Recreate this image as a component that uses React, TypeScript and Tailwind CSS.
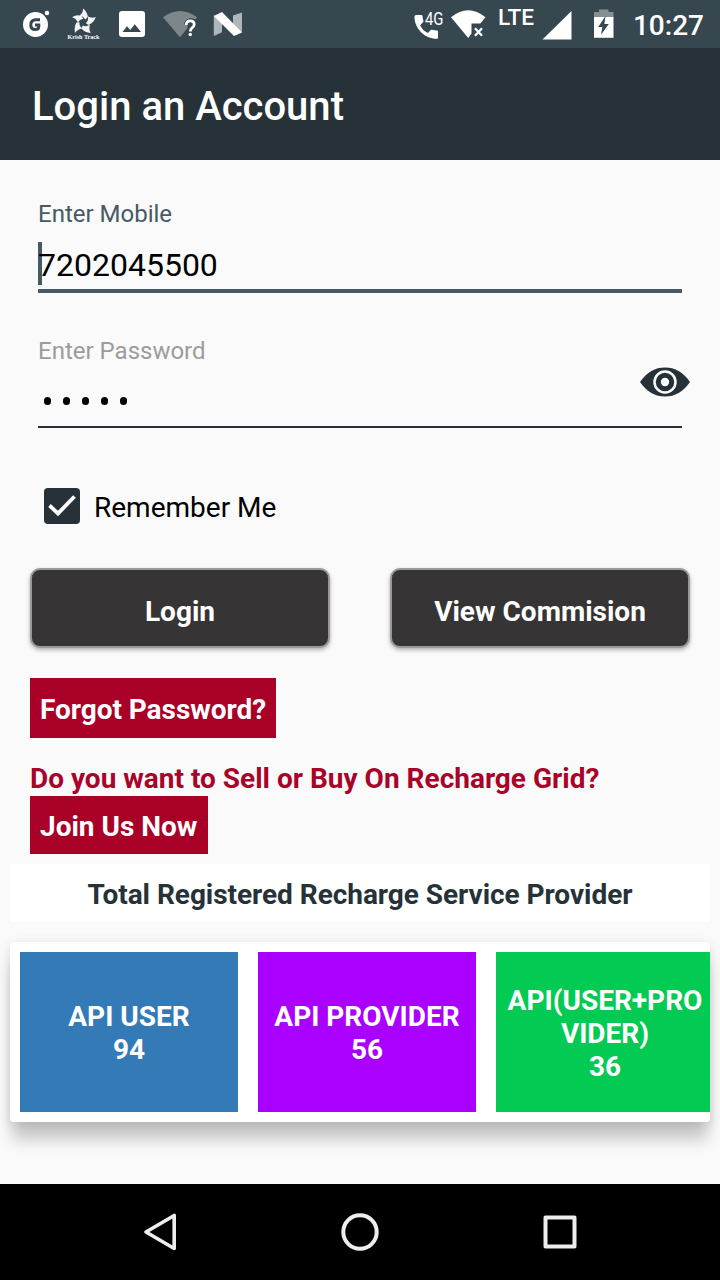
import React from 'react'

const tiles = [
    { title: 'API USER', count: 94, color: 'bg-[#347ab7]' },
    { title: 'API PROVIDER', count: 56, color: 'bg-[#aa00ff]' },
    { title: 'API(USER+PROVIDER)', count: 36, color: 'bg-[#03ca53]' },
]

const StatusBar = () => {
    return (
        <div className="flex h-12 shrink-0 items-center justify-between bg-[#37474f] pl-5 pr-4 text-white">
            <div className="flex items-center gap-3">
                <svg width="32" height="48" viewBox="20 0 32 48">
                    <circle cx="35.5" cy="24.5" r="12.5" fill="#fff" />
                    <circle cx="47" cy="13" r="2.3" fill="#fff" />
                    <path d="M40 19.8H35.8C32.3 19.8 30.8 21.8 30.8 24.8C30.8 27.8 32.5 29.6 35.3 29.6C37.6 29.6 38.8 28.6 38.8 26.6V25H35" fill="none" stroke="#37474f" strokeWidth="3" />
                </svg>
                <svg width="40" height="48" viewBox="64 0 40 48">
                    <g fill="#f1f4f5">
                        <path d="M83 8.5Q87.500 12 87.800 17L85.300 19.500Q83.500 16.200 79.500 15.500Q83 13.500 83 8.500Z" />
                        <path d="M95.800 17Q94 22.500 88.500 25L85.800 23.200Q88.500 21 88 16.500Q91.500 18.500 95.800 17Z" />
                        <path d="M90.800 33Q84.500 32.500 81.500 28.500L82.800 25.500Q86 27.200 90 24.800Q88.500 29 90.800 33Z" />
                        <path d="M75 33Q73.800 27 76.500 22.500L79.500 22.200Q79 26.200 82.300 28.500Q77.500 29.200 75 33Z" />
                        <path d="M72 17.200Q76.500 14 81.500 15.800L83.200 18.800Q79.500 19.300 77.800 22.500Q76 18.200 72 17.200Z" />
                    </g>
                    <text x="67.5" y="39" textLength="32" lengthAdjust="spacingAndGlyphs" fill="#fff" className="font-['Liberation_Serif',serif] text-[7px] font-bold">Krish Track</text>
                </svg>
                <svg width="32" height="48" viewBox="116 0 32 48">
                    <rect x="119" y="11" width="26" height="26" rx="3" fill="#fff" />
                    <path d="M122.500 32L127 26.200L130.200 30L134.800 24.200L141 32Z" fill="#37474f" />
                </svg>
                <svg width="40" height="48" viewBox="160 0 40 48">
                    <path d="M163 17.200Q180 4.800 197 17.200L195.500 19.500C191 16.800 184.500 18.500 184 24.500H187.500V28L180 37.200Z" fill="#7c878c" />
                    <path d="M186.200 25C186.200 22.200 187.900 20.800 190.200 20.800C192.600 20.800 194.200 22.200 194.200 24.500C194.200 27.500 190.300 27.800 190.300 31.400" fill="none" stroke="#fff" strokeWidth="2.7" />
                    <circle cx="190.300" cy="34.500" r="1.700" fill="#fff" />
                </svg>
                <svg width="32" height="48" viewBox="212 0 32 48">
                    <path d="M213.800 15V36L222 32.300V21Z" fill="#afb6b9" />
                    <path d="M242 12.500V33L233 27V15.500Z" fill="#afb6b9" />
                    <path d="M213.800 16L222 12L242 32.500L234 36Z" fill="#fff" />
                </svg>
            </div>
            <div className="flex items-center">
                <svg width="34" height="48" viewBox="412 0 34 48" className="mr-1">
                    <path d="M416.2 15H421.3C421.9 15 422.4 15.5 422.5 16.1C422.6 17.8 422.9 19.4 423.4 20.9C423.5 21.4 423.4 21.9 423 22.3L420.1 25.2C422.1 29.1 424.1 31.1 427.9 33L430.8 30C431.2 29.7 431.6 29.6 432.1 29.7C433.6 30.2 435.2 30.5 436.8 30.5C437.5 30.5 438 31 438 31.6V37.5C438 38.2 437.5 38.8 436.8 38.8C424.6 38.8 414.5 28.6 414.5 16.8C414.5 15.8 415.2 15 416.2 15Z" fill="#fff" />
                    <text x="425" y="24.500" textLength="18.500" lengthAdjust="spacingAndGlyphs" fill="#fff" className="font-[Roboto,sans-serif] text-[17.5px]">4G</text>
                </svg>
                <svg width="38" height="48" viewBox="450 0 38 48" className="mr-2.5">
                    <path d="M451 17.200Q468.200 3.200 485.500 17.200L480.300 23.500H471.500V33.500L468.300 38Z" fill="#fff" />
                    <path d="M475 28.200L482 35.700M482 28.200L475 35.700" stroke="#fff" strokeWidth="2.4" />
                </svg>
                <svg width="38" height="48" viewBox="498 0 38 48" className="mr-1.5">
                    <text x="498" y="25.300" textLength="36" lengthAdjust="spacingAndGlyphs" fill="#fff" className="font-[Roboto,sans-serif] text-[22px] font-medium">LTE</text>
                </svg>
                <svg width="32" height="48" viewBox="542 0 32 48" className="mr-[18px]">
                    <path d="M542.500 39.500L571.500 11V39.500Z" fill="#fff" />
                </svg>
                <svg width="24" height="48" viewBox="592 0 24 48" className="mr-[17px]">
                    <path d="M594 17V12H599V9.500H608.500V12H613.500V17Z" fill="#859095" />
                    <path d="M594 17H613.500V37.800H594Z" fill="#fff" />
                    <path d="M605.500 16L598.200 27H602.300L601 34.800L608.800 24H604.400Z" fill="#37474f" />
                </svg>
                <span className="mt-1 text-[28px] font-medium leading-8">10:27</span>
            </div>
        </div>
    )
}

const App = () => {
    return (
        <div className="flex h-[1280px] w-[720px] flex-col overflow-hidden bg-[#fafafa] font-[Roboto,sans-serif]">
            <StatusBar />
            <header className="flex h-28 shrink-0 items-center bg-[#263238] pl-8 pt-1.5">
                <h1 className="text-[40px] font-medium leading-none text-white">Login an Account</h1>
            </header>

            <main className="flex grow flex-col">
                <div className="flex flex-col px-[38px] pt-10">
                    <label className="text-2xl leading-7 text-[#455a64]">Enter Mobile</label>
                    <div className="mt-3.5 flex h-[51px] border-b-4 border-[#455a64]">
                        <span className="h-[43px] w-1 bg-[#455a64]"></span>
                        <span className="relative -ml-1 text-[32px] leading-[46px] text-black">7202045500</span>
                    </div>
                </div>

                <div className="relative flex flex-col px-[38px] pt-11">
                    <label className="text-2xl leading-7 text-[#9c9c9c]">Enter Password</label>
                    <div className="flex h-[63px] items-center gap-3 border-b-2 border-[#263238] pl-1.5 pt-[11px]">
                        {[0, 1, 2, 3, 4].map((n) => (
                            <span key={n} className="h-2 w-[7px] rounded-full bg-black"></span>
                        ))}
                    </div>
                    <svg width="50" height="32" viewBox="0 0 50 32" className="absolute right-[30px] top-[73px]">
                        <path d="M0 16C7 6 15 1.500 25 1.500S43 6 50 16C43 26 35 30.500 25 30.500S7 26 0 16Z" fill="#263238" />
                        <circle cx="25" cy="16" r="10.500" fill="none" stroke="#fff" strokeWidth="2.500" />
                        <circle cx="25" cy="16" r="4.200" fill="#fff" />
                    </svg>
                </div>

                <div className="flex h-24 items-center gap-3.5 pl-11 pt-[60px]">
                    <span className="flex size-9 items-center justify-center rounded bg-[#263238]">
                        <svg width="36" height="36" viewBox="0 0 36 36">
                            <path d="M5.500 17.500L14 25.500L30.500 8.500" fill="none" stroke="#fff" strokeWidth="3.800" />
                        </svg>
                    </span>
                    <span className="pt-1 text-[28px] leading-8 text-black">Remember Me</span>
                </div>

                <div className="mt-11 flex justify-between px-[30px] text-[28px] font-bold leading-[33px] text-white">
                    <button className="h-20 w-[300px] rounded-[10px] border-2 border-[#999] bg-[#363435] pt-1.5 shadow-[0_2px_4px_rgba(0,0,0,0.3)]">Login</button>
                    <button className="h-20 w-[300px] rounded-[10px] border-2 border-[#999] bg-[#363435] pt-1.5 shadow-[0_2px_4px_rgba(0,0,0,0.3)]">View Commision</button>
                </div>

                <div className="mt-[30px] flex flex-col items-start pl-[30px] text-[28px] font-bold leading-[33px] text-[#a90329]">
                    <a className="h-[60px] w-[246px] whitespace-nowrap bg-[#a90027] pl-2.5 pt-[15px] tracking-[-0.05px] text-white">Forgot Password?</a>
                    <p className="mt-6 h-[34px]">Do you want to Sell or Buy On Recharge Grid?</p>
                    <a className="h-[58px] w-[178px] whitespace-nowrap bg-[#a90027] pl-2.5 pt-3.5 text-white">Join Us Now</a>
                </div>

                <h2 className="mx-2.5 mt-2.5 h-[58px] bg-white pt-3.5 text-center text-[28px] font-bold leading-[33px] tracking-[-0.04px] text-[#263238]">Total Registered Recharge Service Provider</h2>

                <div className="mx-2.5 mt-5 flex gap-5 overflow-hidden rounded bg-white py-2.5 pl-2.5 shadow-[0_20px_16px_-2px_rgba(0,0,0,0.2),0_2px_12px_rgba(0,0,0,0.12)]">
                    {tiles.map((tile) => (
                        <div key={tile.title} className={`flex h-40 w-[218px] shrink-0 flex-col items-center justify-center px-2.5 pt-0.5 text-center text-[28px] font-bold leading-[33px] text-white ${tile.color}`}>
                            <p className="w-full break-all">{tile.title}</p>
                            <p>{tile.count}</p>
                        </div>
                    ))}
                </div>
            </main>

            <nav className="flex h-24 shrink-0 items-center justify-center gap-[152px] bg-black">
                <svg width="48" height="48" viewBox="0 0 48 48" fill="none" stroke="#eee" strokeWidth="3.600" strokeLinejoin="round">
                    <path d="M10 24L38.200 7.500V40.500Z" />
                </svg>
                <svg width="48" height="48" viewBox="0 0 48 48" fill="none" stroke="#eee" strokeWidth="4">
                    <circle cx="24" cy="24" r="16.700" />
                </svg>
                <svg width="48" height="48" viewBox="0 0 48 48" fill="none" stroke="#eee" strokeWidth="4" strokeLinejoin="round">
                    <rect x="9.500" y="9.500" width="29" height="29" />
                </svg>
            </nav>
        </div>
    )
}

export default App
